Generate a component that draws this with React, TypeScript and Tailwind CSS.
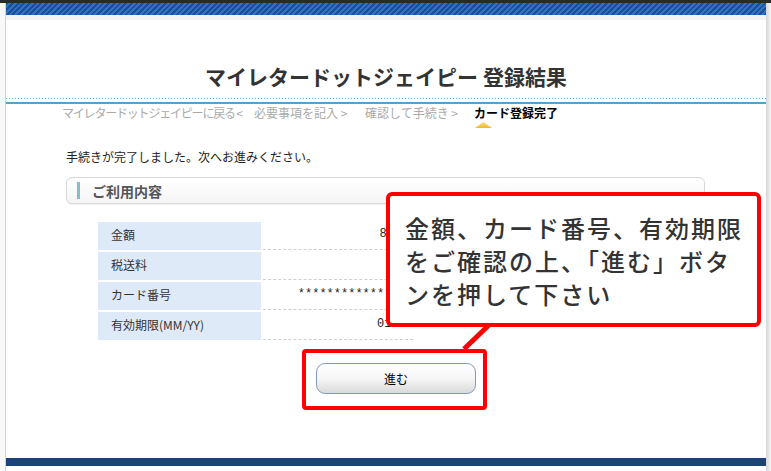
import React from "react";

export default function App() {
  const rows = [
    { label: "金額", value: "800円" },
    { label: "税送料", value: "0円" },
    { label: "カード番号", value: "****************" },
    { label: "有効期限(MM/YY)", value: "01/25" },
  ];
  return (
    <div className="relative w-[771px] h-[471px] overflow-hidden bg-white flex flex-col font-['Noto_Sans_CJK_JP',sans-serif]">
      <div className="h-[3px] bg-[#2a2a2a]" />
      <div className="flex flex-1">
        <div className="w-[6px] bg-[#f8f8f8] border-r border-[#d2d2d2]" />
        <div className="w-[760px] flex flex-col">
          <div className="h-[12px] bg-[repeating-linear-gradient(135deg,#1a4f9e_0px,#1a4f9e_2px,#3270c4_2px,#3270c4_4px)]" />
          <div className="h-[5px] bg-[#f2f2f2]" />
          <div className="mt-[42px] h-[28px] leading-[28px] text-center text-[21px] font-bold text-[#333]">
            マイレタードットジェイピー 登録結果
          </div>
          <div className="mt-[8px] h-[1px] bg-[repeating-linear-gradient(90deg,#5ab4dc_0px,#5ab4dc_1px,transparent_1px,transparent_3px)]" />
          <div className="mt-[3px] h-[2px] bg-[#4ea5cc]" />
          <div className="ml-[56px] mt-[1px] flex items-start text-[12px] leading-[16px] text-[#aaa] whitespace-nowrap">
            <div className="w-[192px] tracking-[-1.2px]">マイレタードットジェイピーに戻る &lt;</div>
            <div className="w-[111px]">必要事項を記入 &gt;</div>
            <div className="w-[109px]">確認して手続き &gt;</div>
            <div className="flex flex-col">
              <div className="font-bold text-black">カード登録完了</div>
              <svg className="ml-[1px] mt-[1px]" width="17" height="6" viewBox="0 0 17 6">
                <defs>
                  <linearGradient id="tri" x1="0" y1="0" x2="0" y2="1">
                    <stop offset="0" stopColor="#fbe07a" />
                    <stop offset="1" stopColor="#f0b828" />
                  </linearGradient>
                </defs>
                <polygon points="8.5,0 17,6 0,6" fill="url(#tri)" />
              </svg>
            </div>
          </div>
          <div className="ml-[60px] mt-[20px] text-[12px] leading-[18px] text-[#222]">
            手続きが完了しました。次へお進みください。
          </div>
          <div className="ml-[60px] mt-[11px] w-[639px] h-[27px] rounded-[6px] border border-[#d8d8d8] bg-gradient-to-b from-white to-[#f5f5f5] shadow-[0_1px_1px_rgba(0,0,0,0.06)] flex items-center">
            <div className="ml-[10px] w-[3px] h-[17px] bg-[#7fbfcc]" />
            <div className="ml-[12px] text-[14px] font-bold text-[#555] leading-none">ご利用内容</div>
          </div>
          <div className="ml-[92px] mt-[18px] flex flex-col gap-[2px]">
            {rows.map((r) => (
              <div key={r.label} className="flex h-[28px] gap-[2px]">
                <div className="w-[163px] bg-[#dfeaf9] pl-[13px] pb-[2px] flex items-center text-[12px] text-[#333]">
                  {r.label}
                </div>
                <div className="w-[150px] border-b border-dashed border-[#cfcfcf] pb-[4px] flex items-center justify-end text-[12px] leading-[14px] text-[#222] font-['Liberation_Mono','Noto_Sans_CJK_JP',monospace]">
                  {r.value}
                </div>
              </div>
            ))}
          </div>
          <div className="ml-[296px] mt-[9px] w-[185px] h-[61px] border-4 border-[#ff0000] rounded-[4px]">
            <button className="ml-[10px] mt-[10px] w-[160px] h-[31px] rounded-[9px] border border-[#8499b8] bg-gradient-to-b from-white via-[#f6f6f6] to-[#dadada] text-[12px] text-black flex items-center justify-center">
              進む
            </button>
          </div>
          <div className="flex-1" />
          <div className="h-[8px] bg-[#1b4379]" />
          <div className="h-[5px] bg-white" />
        </div>
        <div className="w-[5px] bg-gradient-to-r from-[#d6d6d6] to-[#f4f4f4]" />
      </div>

      <div className="absolute left-[386px] top-[192px] w-[375px] h-[135px] border-4 border-[#ff0000] rounded-[6px] bg-white pl-[15px] pt-[15px]">
        <div className="text-[24px] leading-[33px] tracking-[2px] text-[#333] font-medium whitespace-nowrap">
          金額、カード番号、有効期限
          <br />
          をご確認の上、「進む」ボタ
          <br />
          ンを押して下さい
        </div>
      </div>
      <svg className="absolute left-[450px] top-[318px] pointer-events-none" width="50" height="40" viewBox="0 0 50 40">
        <line x1="39" y1="7" x2="14" y2="31" stroke="#ff0000" strokeWidth="5" />
      </svg>
    </div>
  );
}
